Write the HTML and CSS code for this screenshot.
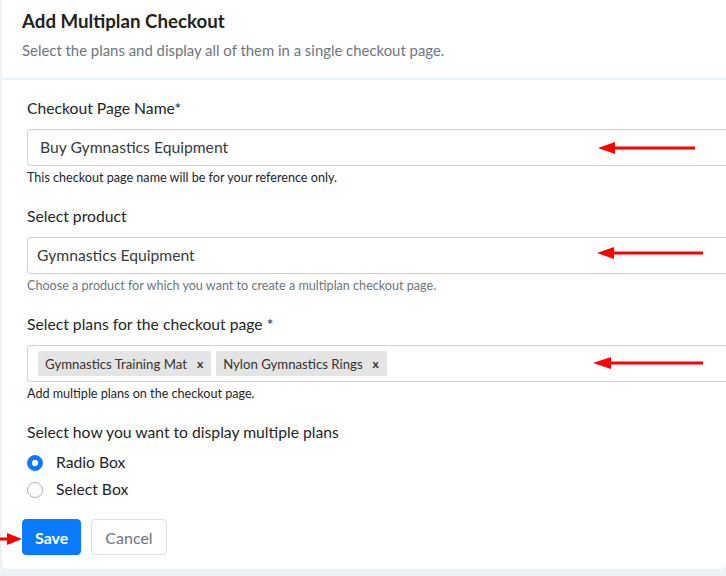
FILE: index.html
```html
<!DOCTYPE html>
<html>
<head>
<meta charset="utf-8">
<link rel="stylesheet" href="styles.css">
</head>
<body>
<div class="card">
  <div class="card-header">
    <h1 class="title">Add Multiplan Checkout</h1>
    <p class="subtitle">Select the plans and display all of them in a single checkout page.</p>
  </div>
  <div class="card-body">
    <div class="group">
      <div class="label">Checkout Page Name*</div>
      <div class="input input-wide">Buy Gymnastics Equipment</div>
      <div class="help">This checkout page name will be for your reference only.</div>
    </div>
    <div class="group">
      <div class="label">Select product</div>
      <div class="input">Gymnastics Equipment</div>
      <div class="help help-muted">Choose a product for which you want to create a multiplan checkout page.</div>
    </div>
    <div class="group">
      <div class="label">Select plans for the checkout page *</div>
      <div class="input input-tags">
        <span class="tag">Gymnastics Training Mat <span class="tag-x">x</span></span>
        <span class="tag">Nylon Gymnastics Rings <span class="tag-x">x</span></span>
      </div>
      <div class="help">Add multiple plans on the checkout page.</div>
    </div>
    <div class="label">Select how you want to display multiple plans</div>
    <div class="radios">
      <div class="radio-row"><span class="radio radio-on"></span><span>Radio Box</span></div>
      <div class="radio-row"><span class="radio"></span><span>Select Box</span></div>
    </div>
    <div class="actions">
      <button class="btn btn-primary">Save</button>
      <button class="btn btn-light">Cancel</button>
    </div>
  </div>
</div>

<svg class="arrow arrow-1" width="100" height="14" viewBox="0 0 100 14"><polygon points="0,7 17,1 17,13" fill="#f00"/><rect x="15" y="5.5" width="82" height="3" fill="#f00"/></svg>
<svg class="arrow arrow-2" width="110" height="14" viewBox="0 0 110 14"><polygon points="0,7 17,1 17,13" fill="#f00"/><rect x="15" y="5.5" width="91" height="3" fill="#f00"/></svg>
<svg class="arrow arrow-3" width="112" height="14" viewBox="0 0 112 14"><polygon points="0,7 18,1 18,13" fill="#f00"/><rect x="16" y="5.5" width="94" height="3" fill="#f00"/></svg>
<svg class="arrow arrow-4" width="23" height="14" viewBox="0 0 23 14"><polygon points="22,7 7,1 7,13" fill="#f00"/><rect x="0" y="5.5" width="9" height="3" fill="#f00"/></svg>
</body>
</html>
```
FILE: styles.css
```css
html, body {
  margin: 0;
  padding: 0;
}
body {
  background: #eef2f5;
  width: 726px;
  height: 576px;
  overflow: hidden;
  position: relative;
  font-family: "Lato", "Open Sans", sans-serif;
  color: #212529;
}
.card {
  margin-left: 2px;
  width: 724px;
  height: 569px;
  overflow: hidden;
  background: #fff;
  border-radius: 0 0 6px 6px;
  box-sizing: border-box;
}
.card-header {
  padding: 9px 20px 18px;
  border-bottom: 2px solid #e8f1fa;
}
.title {
  margin: 0;
  font-size: 18.7px;
  line-height: 24px;
  font-weight: 700;
  color: #1e1f22;
}
.subtitle {
  margin: 7px 0 0;
  font-size: 14.9px;
  line-height: 20px;
  color: #6c757d;
}
.card-body {
  padding: 17px 0 0 25px;
}
.group {
  margin-bottom: 19px;
}
.label {
  font-size: 15.7px;
  line-height: 22px;
  color: #212529;
}
.input {
  margin-top: 10px;
  margin-right: -20px;
  height: 37px;
  box-sizing: border-box;
  border: 1px solid #ccd2d8;
  border-right: none;
  border-radius: 4px 0 0 4px;
  padding: 0 9px 2px;
  display: flex;
  align-items: center;
  font-size: 15.7px;
  color: #343a40;
}
.input-wide {
  padding-left: 12px;
}
.input-tags {
  padding-left: 10px;
  padding-bottom: 0;
  gap: 5px;
}
.tag {
  display: inline-flex;
  align-items: center;
  height: 25px;
  padding: 0 8px 0 7px;
  background: #e4e4e4;
  border-radius: 2px;
  font-size: 13.2px;
  color: #333;
}
.tag-x {
  margin-left: 10px;
  font-weight: 700;
  font-size: 12px;
}
.help {
  margin-top: 4px;
  font-size: 12.6px;
  line-height: 16px;
  color: #212529;
}
.help-muted {
  color: #6c757d;
}
.radios {
  margin-top: 5px;
}
.radio-row {
  height: 27px;
  display: flex;
  align-items: center;
  font-size: 15.7px;
  gap: 13px;
}
.radio {
  width: 16px;
  height: 16px;
  box-sizing: border-box;
  border-radius: 50%;
  border: 1px solid #adb5bd;
  background: #fff;
  margin-top: 3px;
}
.radio-on {
  border-color: #0a7bff;
  background: radial-gradient(circle, #fff 0 3px, #0a7bff 3.5px);
}
.actions {
  margin: 17px 0 0 -5px;
  display: flex;
  gap: 10px;
}
.btn {
  height: 36px;
  border-radius: 4px;
  font-family: inherit;
  font-size: 16px;
  cursor: pointer;
}
.btn-primary {
  padding: 0 12px;
  background: #0a7bff;
  border: 1px solid #0a7bff;
  color: #fff;
  font-weight: 700;
}
.btn-light {
  padding: 0 13px;
  background: #fff;
  border: 1px solid #dcdfe3;
  color: #6c757d;
}
.arrow {
  position: absolute;
}
.arrow-1 { left: 598px; top: 141px; }
.arrow-2 { left: 597px; top: 246px; }
.arrow-3 { left: 593px; top: 356px; }
.arrow-4 { left: 0; top: 532px; }
```
